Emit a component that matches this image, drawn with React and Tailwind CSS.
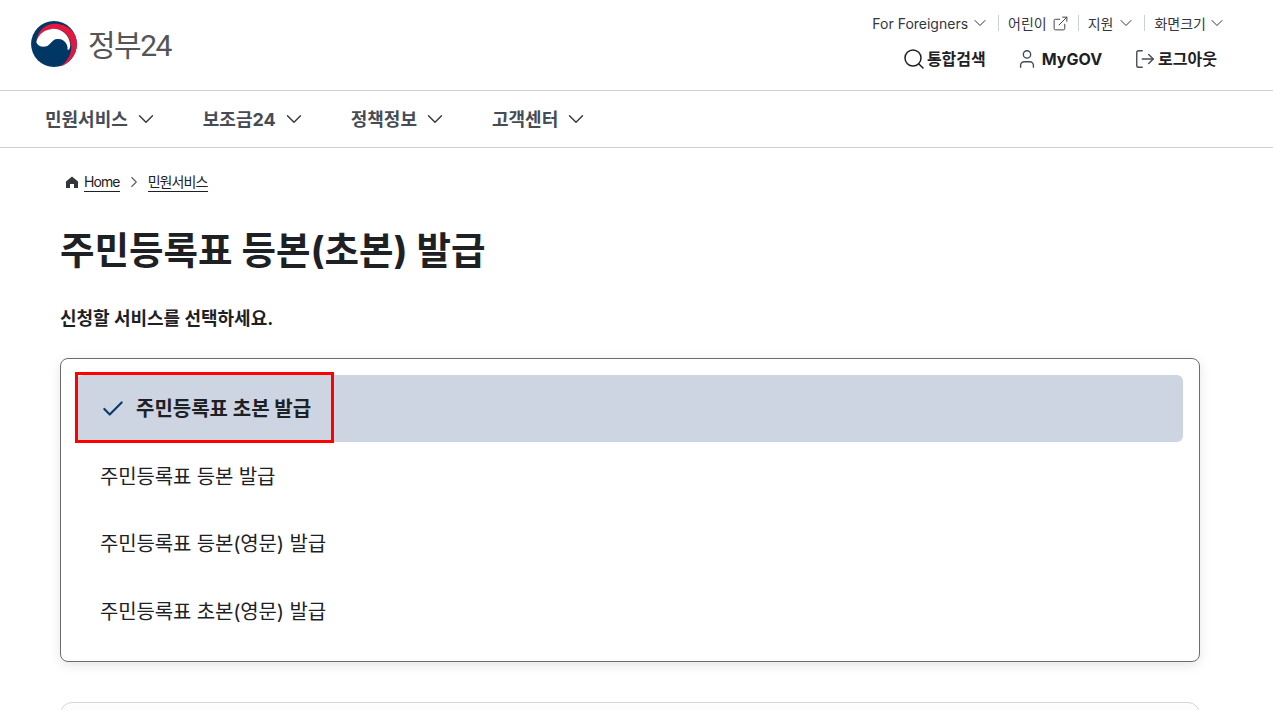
import { ChevronDown, ChevronRight, Search, User, LogOut, ExternalLink, Check } from 'lucide-react'

const mainMenu = ['민원서비스', '보조금24', '정책정보', '고객센터']
const services = ['주민등록표 등본 발급', '주민등록표 등본(영문) 발급', '주민등록표 초본(영문) 발급']

function Logo() {
  return (
    <svg width="50" height="48" viewBox="0 0 48 46" aria-hidden="true" className="mb-[2px]">
      <circle cx="24" cy="23" r="22" fill="#003764" />
      <path d="M7 21C8 10 16 3.500 25 3.500C37 3.500 46 12 46 23C46 34 38 42 30 44.500C38 39 41.500 31 40.500 24C39 13 30 7.500 22 8.500C14 9.500 9 14 7 21Z" fill="#e5173f" />
      <path d="M7 21C9 13.500 15 9 22 8.500C31 8 38.500 14 39.500 23C39.800 27 38.500 30 36 28C35 20 29 17 24.500 19C21 20.500 20 25 15.500 25.500C11 26 8 24 7 21Z" fill="#fff" />
      <path d="M24.500 19C30 16.500 36 20 37 26C37.500 32 34 37 30 39C34 34 33 28 29 25C26 23 25 20 24.500 19Z" fill="#003764" />
    </svg>
  )
}

export default function App() {
  return (
    <div className="h-[710px] overflow-hidden bg-white text-[#1e2124] font-['Inter','Noto_Sans_CJK_KR',sans-serif]">

      {/* Top header */}
      <header className="h-[91px] border-b border-[#cdd1d5] flex justify-between pl-[29px] pr-[46px]">
        <div className="flex items-center gap-[9px] h-[90px]">
          <Logo />
          <span className="text-[30px] font-normal text-[#555] tracking-[-1.5px] font-['Roboto','Noto_Sans_CJK_KR',sans-serif]">정부24</span>
        </div>

        <div className="flex flex-col items-end">
          {/* Utility links */}
          <div className="flex items-center h-[20px] mt-[13px] text-[14px] text-[#33363d]">
            <span>For Foreigners</span>
            <ChevronDown className="ml-[2px] mr-[8px] w-[20px] h-[20px]" strokeWidth={1.2} />
            <div className="w-px h-[16px] bg-[#cdd1d5] mr-[9px]" />
            <span>어린이</span>
            <ExternalLink className="ml-[5px] mr-[9px] w-[17px] h-[17px]" strokeWidth={1.3} />
            <div className="w-px h-[16px] bg-[#cdd1d5] mr-[9px]" />
            <span>지원</span>
            <ChevronDown className="ml-[3px] mr-[8px] w-[20px] h-[20px]" strokeWidth={1.2} />
            <div className="w-px h-[16px] bg-[#cdd1d5] mr-[9px]" />
            <span>화면크기</span>
            <ChevronDown className="ml-[1px] w-[20px] h-[20px]" strokeWidth={1.2} />
          </div>

          {/* Account links */}
          <div className="flex items-center h-[24px] mt-[14px] pr-[10px] text-[16px] font-bold">
            <Search className="w-[24px] h-[24px]" strokeWidth={1.5} />
            <span className="ml-[1px]">통합검색</span>
            <User className="ml-[30px] w-[22px] h-[22px] text-[#464c53]" strokeWidth={1.5} />
            <span className="ml-[4px]">MyGOV</span>
            <LogOut className="ml-[32px] w-[22px] h-[22px] text-[#464c53]" strokeWidth={1.5} />
            <span className="ml-[2px]">로그아웃</span>
          </div>
        </div>
      </header>

      {/* Main menu */}
      <nav className="h-[57px] border-b border-[#cdd1d5] flex items-center pl-[45px] gap-[44px] text-[18px] font-bold text-[#464c53]">
        {mainMenu.map((label) => (
          <div key={label} className="flex items-center gap-[5px]">
            <span>{label}</span>
            <ChevronDown className="w-[26px] h-[26px] text-[#33363d]" strokeWidth={1.3} />
          </div>
        ))}
      </nav>

      <main className="px-[60px] w-[1260px]">
        {/* Breadcrumb */}
        <div className="flex items-center h-[24px] mt-[22px] pl-[6px] text-[14px] tracking-[-0.9px]">
          <svg width="12" height="12" viewBox="0 0 12 12" aria-hidden="true" className="fill-[#33363d]">
            <path d="M6 .5 12 5.500V12H8V8H4V12H0V5.500Z" />
          </svg>
          <span className="ml-[6px] border-b border-[#1e2124] leading-[19px]">Home</span>
          <ChevronRight className="mx-[5px] w-[18px] h-[18px] text-[#58616a]" strokeWidth={1.5} />
          <span className="border-b border-[#1e2124] leading-[19px]">민원서비스</span>
        </div>

        <h1 className="mt-[31px] text-[37.500px] leading-[52px] font-bold">주민등록표 등본(초본) 발급</h1>
        <p className="mt-[29px] text-[18px] leading-[26px] font-bold">신청할 서비스를 선택하세요.</p>

        {/* Service list */}
        <div className="mt-[26px] h-[304px] border border-[#6d6d6d] rounded-[8px] bg-white p-[16px] shadow-[0_3px_12px_rgba(0,0,0,0.1)]">
          <div className="relative h-[67px] rounded-[6px] bg-[#cdd5e2] flex items-center pl-[23px] pt-[1px] text-[20px] font-bold">
            <Check className="w-[26px] h-[26px] text-[#0b3a6f]" strokeWidth={2} />
            <span className="ml-[10px]">주민등록표 초본 발급</span>
            <div className="absolute left-[-2px] top-[-3px] w-[259px] h-[71px] border-[3px] border-[#ff0000]" />
          </div>
          {services.map((label) => (
            <div key={label} className="h-[67.500px] flex items-center pl-[23px] pt-[2px] text-[20px] tracking-[-0.15px]">{label}</div>
          ))}
        </div>

        {/* Next card, cut off by the window */}
        <div className="mt-[40px] h-[120px] border border-[#d6d6d6] rounded-[12px] bg-[#fdfdfd]" />
      </main>
    </div>
  )
}
